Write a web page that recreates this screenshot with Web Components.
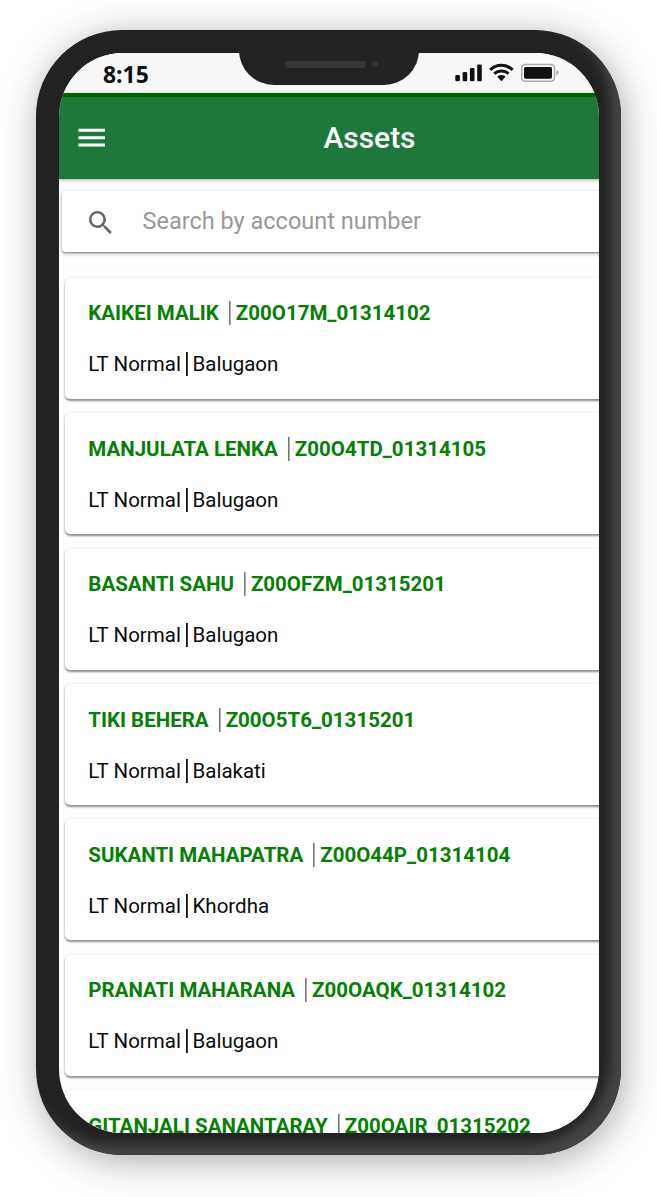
<!DOCTYPE html>
<html lang="en">
<head>
<meta charset="utf-8">
<title>Assets</title>
<style>
  body {
    margin: 0;
    height: 1197px;
    overflow: hidden;
    background: #fff;
    font-family: Roboto, "Liberation Sans", sans-serif;
  }
</style>
</head>
<body>
<phone-frame>
  <status-bar time="8:15"></status-bar>
  <app-header>Assets</app-header>
  <search-box placeholder="Search by account number"></search-box>
  <asset-list></asset-list>
</phone-frame>

<script>
const define = (name, html, setup) => {
  const template = document.createElement('template');
  template.innerHTML = html;
  customElements.define(name, class extends HTMLElement {
    constructor() {
      super();
      this.attachShadow({mode: 'open'});
      this.shadowRoot.appendChild(template.content.cloneNode(true));
    }
    connectedCallback() {
      if (setup) setup(this, this.shadowRoot);
    }
  });
};

define('phone-frame', `
  <style>
    :host { display: block; padding: 30px 36px 42px; }
    .body {
      position: relative;
      box-sizing: border-box;
      width: 585px;
      height: 1125px;
      padding: 22.5px;
      border-radius: 86px;
      background: #222;
      box-shadow: inset -11px -11px 11px #444, 3px 6px 38px rgba(0, 0, 0, .33);
    }
    .screen {
      width: 540px;
      height: 1080px;
      border-radius: 64px;
      overflow: hidden;
      background: #fefefe;
    }
    /* the app is laid out wider than the screen and runs off its right edge */
    .app { width: 622px; }
    .notch {
      position: absolute;
      top: 20px;
      left: 203px;
      width: 179.5px;
      height: 35.2px;
      padding-top: 10.5px;
      box-sizing: border-box;
      display: flex;
      align-items: flex-start;
      border-radius: 0 0 40px 40px;
      background: #222;
    }
    .speaker { width: 81px; height: 7px; margin-left: 46px; border-radius: 4px; background: #353535; }
    .camera { width: 6px; height: 6px; margin: .5px 0 0 6px; border-radius: 50%; background: #353535; }
  </style>
  <div class="body">
    <div class="screen"><div class="app"><slot></slot></div></div>
    <div class="notch"><div class="speaker"></div><div class="camera"></div></div>
  </div>
`);

define('status-bar', `
  <style>
    :host {
      display: flex;
      justify-content: space-between;
      box-sizing: border-box;
      width: 540px;
      height: 40.5px;
      padding: 0 39.5px 0 44.5px;
      background: #f8f8f8;
      color: #111;
    }
    .time { font: 700 22.9px/43px "Open Sans", "Noto Sans", sans-serif; }
    svg { display: block; margin-top: 9.5px; }
  </style>
  <div class="time"></div>
  <svg width="105" height="22" viewBox="0 0 105 22">
    <g fill="#111">
      <rect x="1.3" y="13" width="4.6" height="6.3" rx="1.3"/>
      <rect x="8.6" y="10" width="4.6" height="9.3" rx="1.3"/>
      <rect x="15.9" y="6" width="4.6" height="13.3" rx="1.3"/>
      <rect x="23.2" y="2.4" width="4.6" height="16.9" rx="1.3"/>
      <path d="M43.6 14.2q3.8-2.3 7.6 0q.5.4 0 .9l-3.3 3.6q-.5.5-1 0l-3.3-3.6q-.5-.5 0-.9z"/>
    </g>
    <g fill="none" stroke="#111" stroke-width="3">
      <path d="M36.2 7.8Q41.2 3.2 47.4 3.2T58.6 7.8"/>
      <path d="M40.2 11.7Q43.3 9 47.4 9T54.6 11.7"/>
    </g>
    <rect x="67.7" y="2.4" width="32.8" height="16.8" rx="3.5" fill="none" stroke="#aaa" stroke-width="1.5"/>
    <rect x="70" y="4.9" width="28" height="11.8" rx="1.6" fill="#111"/>
    <path d="M102.4 8q2.2.8 2.2 2.7t-2.2 2.7z" fill="#aaa"/>
  </svg>
`, (el, root) => {
  root.querySelector('.time').textContent = el.getAttribute('time');
});

define('app-header', `
  <style>
    :host {
      display: grid;
      grid-template-columns: 80px 1fr 80px;
      align-items: center;
      box-sizing: border-box;
      position: relative;
      height: 86px;
      border-top: 4px solid #006400;
      background: #1f783b;
      color: #fff;
      box-shadow: 0 1px 4px rgba(0, 0, 0, .35);
    }
    svg { display: block; margin-left: 15px; }
    .title { text-align: center; font-size: 29.9px; font-weight: 500; line-height: 34px; padding-bottom: 1px; }
  </style>
  <svg width="35.4" height="35.4" viewBox="0 0 24 24" fill="#fff">
    <path d="M3 18h18v-2H3v2zm0-5h18v-2H3v2zm0-7v2h18V6H3z"/>
  </svg>
  <div class="title"><slot></slot></div>
`);

define('search-box', `
  <style>
    :host {
      display: flex;
      align-items: center;
      height: 61px;
      margin: 12px 4px 0 3.5px;
      border-radius: 3px;
      background: #fff;
      box-shadow: 0 1px 2px rgba(0, 0, 0, .4), 0 2px 4px rgba(0, 0, 0, .2);
    }
    svg { flex: none; margin: 2px 0 0 23px; }
    input {
      flex: 1;
      margin: 0 0 2px 26px;
      padding: 0;
      border: 0;
      outline: 0;
      background: none;
      font: 23.5px Roboto, "Liberation Sans", sans-serif;
    }
    input::placeholder { color: #999; opacity: 1; }
  </style>
  <svg width="31.5" height="31.5" viewBox="0 0 24 24" fill="#666">
    <path d="M15.5 14h-.79l-.28-.27A6.47 6.47 0 0 0 16 9.5 6.5 6.5 0 1 0 9.5 16c1.61 0 3.09-.59 4.23-1.57l.27.28v.79l5 4.99L20.49 19l-4.99-5zm-6 0C7.01 14 5 11.99 5 9.5S7.01 5 9.5 5 14 7.01 14 9.5 11.99 14 9.5 14z"/>
  </svg>
  <input type="text">
`, (el, root) => {
  root.querySelector('input').placeholder = el.getAttribute('placeholder');
});

define('asset-card', `
  <style>
    :host {
      display: flex;
      flex-direction: column;
      box-sizing: border-box;
      height: 121px;
      padding: 23.6px 23.3px 0;
      border-radius: 5px;
      background: #fff;
      box-shadow: 0 1.5px 2px rgba(0, 0, 0, .4), 0 1px 4px rgba(0, 0, 0, .1);
      font-size: 20.5px;
      line-height: 24px;
      white-space: nowrap;
    }
    .row { display: flex; height: 24px; }
    .head { color: #048004; font-weight: 700; }
    .info { margin-top: 27px; color: #0a0a0a; }
    svg { flex: none; display: block; width: 2px; height: 24px; margin: 0 5px; fill: #111; }
    .head svg { margin-left: 10px; fill: #777; }
    .info svg { margin-right: 4.6px; }
  </style>
  <div class="row head"><span class="name"></span><svg><rect width="1.6" height="24"/></svg><span class="account"></span></div>
  <div class="row info"><span class="tariff"></span><svg><rect width="1.8" height="24"/></svg><span class="place"></span></div>
`, (el, root) => {
  for (const key of ['name', 'account', 'tariff', 'place']) {
    root.querySelector('.' + key).textContent = el.getAttribute(key);
  }
});

const assets = [
  ['KAIKEI MALIK', 'Z00O17M_01314102', 'Balugaon'],
  ['MANJULATA LENKA', 'Z00O4TD_01314105', 'Balugaon'],
  ['BASANTI SAHU', 'Z00OFZM_01315201', 'Balugaon'],
  ['TIKI BEHERA', 'Z00O5T6_01315201', 'Balakati'],
  ['SUKANTI MAHAPATRA', 'Z00O44P_01314104', 'Khordha'],
  ['PRANATI MAHARANA', 'Z00OAQK_01314102', 'Balugaon'],
  ['GITANJALI SANANTARAY', 'Z00OAIR_01315202', 'Balugaon'],
];

define('asset-list', `
  <style>
    :host {
      display: flex;
      flex-direction: column;
      gap: 14.4px;
      padding: 25.9px 6px 0 6.5px;
    }
  </style>
`, (el, root) => {
  for (const [name, account, place] of assets) {
    const card = document.createElement('asset-card');
    card.setAttribute('name', name);
    card.setAttribute('account', account);
    card.setAttribute('tariff', 'LT Normal');
    card.setAttribute('place', place);
    root.appendChild(card);
  }
});
</script>
</body>
</html>
